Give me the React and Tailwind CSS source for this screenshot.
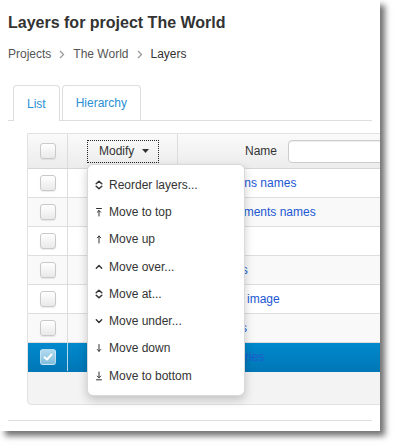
import React from "react";

const Icon = ({ d, w = 1.4 }) => (
  <svg width="8" height="10" viewBox="0 0 8 10" fill="none" stroke="#333" strokeWidth={w} strokeLinecap="round" strokeLinejoin="round" className="shrink-0">
    <path d={d} />
  </svg>
);

const menu = [
  { label: "Reorder layers...", d: "M1.2 3.8 L4 1.2 L6.8 3.8 M1.2 6.2 L4 8.8 L6.8 6.2", w: 1.5 },
  { label: "Move to top", d: "M1.5 1.5 H6.5 M4 3.5 V9 M2.3 5.2 L4 3.5 L5.7 5.2", w: 1 },
  { label: "Move up", d: "M4 2 V9 M2.3 3.8 L4 2 L5.7 3.8", w: 1 },
  { label: "Move over...", d: "M1.3 6.3 L4 3.6 L6.7 6.3", w: 1.4 },
  { label: "Move at...", d: "M1.2 3.8 L4 1.2 L6.8 3.8 M1.2 6.2 L4 8.8 L6.8 6.2", w: 1.5 },
  { label: "Move under...", d: "M1.3 3.8 L4 6.5 L6.7 3.8", w: 1.4 },
  { label: "Move down", d: "M4 1.5 V8.3 M2.3 6.5 L4 8.3 L5.7 6.5", w: 1 },
  { label: "Move to bottom", d: "M4 1 V6.8 M2.3 5.1 L4 6.8 L5.7 5.1 M1.5 8.8 H6.5", w: 1 },
];

const rows = ["Regions names", "Settlements names", "Cities", "Roads", "Aerial image", "Rivers", "Countries"];

const Checkbox = ({ checked }) =>
  checked ? (
    <div className="w-[16px] h-[16px] rounded-[3px] border border-white/40 bg-linear-to-b from-white/70 to-white/50 flex items-center justify-center">
      <svg width="10" height="8" viewBox="0 0 10 8" fill="none" stroke="white" strokeWidth="2" strokeLinecap="round" strokeLinejoin="round">
        <path d="M1.5 4.2 L4 6.5 L8.5 1.5" />
      </svg>
    </div>
  ) : (
    <div className="w-[16px] h-[16px] rounded-[3px] border border-[#c9c9c9] bg-linear-to-b from-white to-[#e9e9e9] shadow-[0_1px_1px_rgba(0,0,0,0.08)]" />
  );

const Chevron = () => (
  <svg width="6" height="9" viewBox="0 0 6 9" fill="none" stroke="#9a9a9a" strokeWidth="1.3" className="mx-[8px]">
    <path d="M1 1 L4.5 4.5 L1 8" />
  </svg>
);

export default function App() {
  return (
    <div className="w-[395px] h-[446px] bg-white font-['Liberation_Sans',Arial,sans-serif]">
      <div className="relative w-[380px] h-[431px] bg-white overflow-hidden shadow-[5px_5px_6px_rgba(0,0,0,0.55)]">
        <div className="px-2">
          <h1 className="pt-[13px] text-[16px] leading-[20px] font-bold text-[#333]">Layers for project The World</h1>
          <div className="mt-[13px] flex items-center text-[12px] leading-[16px]">
            <span className="text-[#555]">Projects</span>
            <Chevron />
            <span className="text-[#555]">The World</span>
            <Chevron />
            <span className="text-[#333]">Layers</span>
          </div>
          <div className="mt-[23px] flex items-end gap-[2px] border-b border-[#ddd] pl-[5px] h-[36px]">
            <div className="h-[36px] -mb-px px-[13px] flex items-center bg-white border border-b-0 border-[#ddd] rounded-t-[4px] text-[12px] text-[#2a8fd4]">List</div>
            <div className="h-[35px] px-[13px] flex items-center bg-white border border-b-0 border-[#ddd] rounded-t-[4px] text-[12px] text-[#2a8fd4]">Hierarchy</div>
          </div>
          <div className="mt-[12px] ml-[19px] w-[400px] border border-[#e2e2e2] rounded-bl-[4px] bg-[#f3f3f3] text-[12px]">
            <div className="flex h-[35px] border-b border-[#d6d6d6] bg-linear-to-b from-[#fafafa] to-[#ececec]">
              <div className="w-[40px] border-r border-[#ddd] flex items-center justify-center">
                <Checkbox />
              </div>
              <div className="w-[110px] border-r border-[#ddd] flex items-center">
                <div className="ml-[19px] w-[72px] h-[23px] border border-dotted border-[#222] flex items-center pl-[11px] text-[#333]">
                  Modify
                  <svg width="7" height="4" viewBox="0 0 7 4" className="ml-[8px]">
                    <path d="M0 0 H7 L3.5 4 Z" fill="#333" />
                  </svg>
                </div>
              </div>
              <div className="flex-1 flex items-center pl-[67px] text-[#333]">
                Name
                <div className="ml-[11px] w-[120px] h-[23px] bg-white border border-[#ccc] rounded-[4px] shadow-[inset_0_1px_1px_rgba(0,0,0,0.075)]" />
              </div>
            </div>
            {rows.map((r, i) => {
              const sel = i === 6;
              const bg = sel ? "bg-linear-to-b from-[#0089cd] to-[#0077b6]" : i % 2 === 0 ? "bg-white" : "bg-[#f9f9f9]";
              return (
                <div key={r} className={`flex h-[29px] border-b ${sel ? "border-[#0077b6]" : "border-[#ddd]"} ${bg}`}>
                  <div className={`w-[40px] border-r ${sel ? "border-white/70" : "border-[#ddd]"} flex items-center justify-center`}>
                    <Checkbox checked={sel} />
                  </div>
                  <div className="w-[110px]" />
                  <div className={`flex-1 flex items-center pl-[35px] ${sel ? "text-[#1f5ccc]" : "text-[#2157d3]"}`}>{r}</div>
                </div>
              );
            })}
            <div className="h-[32px]" />
          </div>
          <div className="mt-[15px] border-t border-[#ddd]" />
        </div>

        <div className="absolute left-[87px] top-[164px] w-[158px] py-[6px] bg-white border border-[rgba(0,0,0,0.15)] rounded-[6px] shadow-[0_4px_10px_rgba(0,0,0,0.2)] z-10">
          {menu.map((m) => (
            <div key={m.label} className="h-[27.3px] flex items-center pl-[7px] gap-[6px] text-[12px] text-[#333]">
              <Icon d={m.d} w={m.w} />
              <span>{m.label}</span>
            </div>
          ))}
        </div>
      </div>
    </div>
  );
}
